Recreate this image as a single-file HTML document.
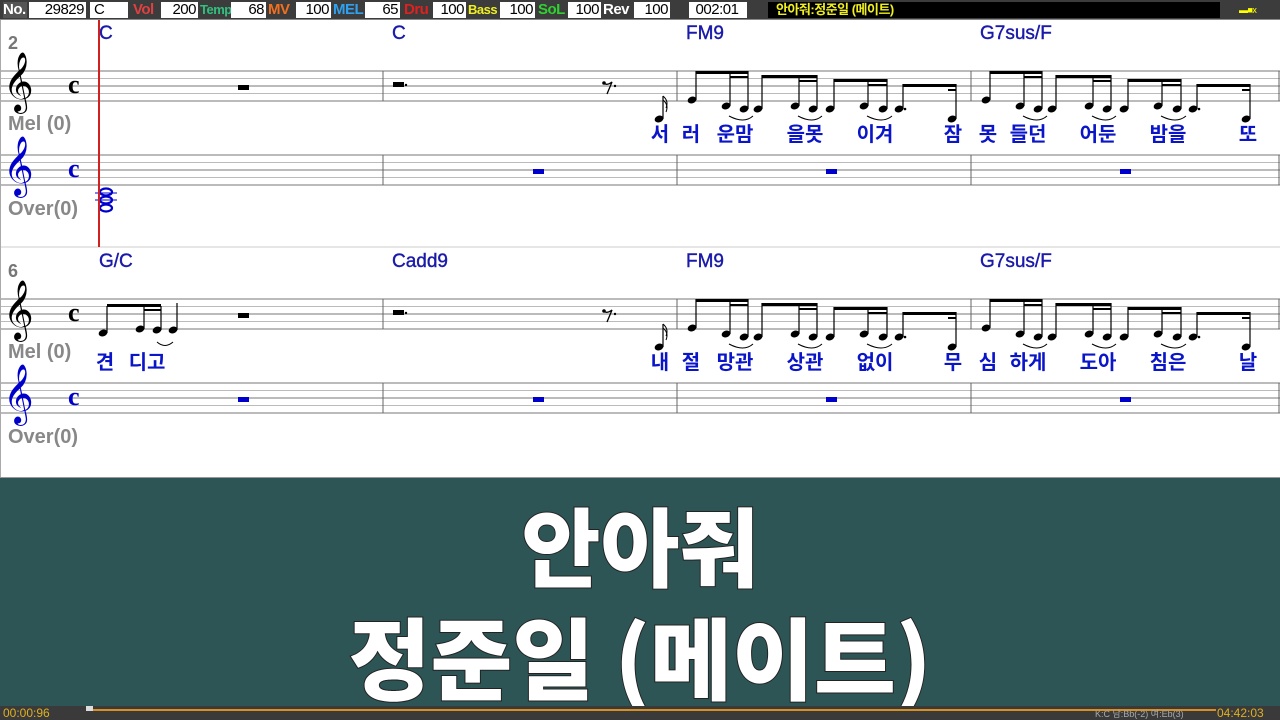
<!DOCTYPE html>
<html><head><meta charset="utf-8">
<style>
*{margin:0;padding:0;box-sizing:border-box}
body{width:1280px;height:720px;overflow:hidden;background:#fff;font-family:"Liberation Sans","Noto Sans CJK KR",sans-serif;position:relative}
#top{position:absolute;left:0;top:0;width:1280px;height:20px;background:#3c3c3c;border-bottom:1px solid #888;z-index:2}
.c{position:absolute;top:2px;height:16px;font-size:15px;line-height:16px;font-family:"Liberation Sans",sans-serif;letter-spacing:-0.5px}
.w{background:#fff;color:#000;text-align:right;padding-right:2px}
.l{font-weight:bold}
#band{position:absolute;left:0;top:477px;width:1280px;height:229px;background:#2d5555;border-top:1px solid #999}
.big{position:absolute;left:0;width:1280px;text-align:center;color:#fff;font-family:"Noto Sans CJK KR",sans-serif;font-weight:900;-webkit-text-stroke:2px #222;paint-order:stroke fill;line-height:1}
#bot{position:absolute;left:0;top:706px;width:1280px;height:14px;background:#3a3a3a}
</style></head><body>
<svg id="s" width="1280" height="477" style="position:absolute;left:0;top:0" viewBox="0 0 1280 477"></svg>
<div id="top">
<div class="c l" style="left:3px;color:#fff;background:#555;width:24px">No.</div>
<div class="c w" style="left:29px;width:57px">29829</div>
<div class="c w" style="left:90px;width:38px;text-align:left;padding-left:4px">C</div>
<div class="c l" style="left:133px;color:#e04040">Vol</div>
<div class="c w" style="left:161px;width:37px">200</div>
<div class="c l" style="left:200px;color:#30c080;font-size:13px">Temp</div>
<div class="c w" style="left:231px;width:35px">68</div>
<div class="c l" style="left:268px;color:#f07020">MV</div>
<div class="c w" style="left:296px;width:35px">100</div>
<div class="c l" style="left:333px;color:#30a0f0">MEL</div>
<div class="c w" style="left:365px;width:35px">65</div>
<div class="c l" style="left:404px;color:#e02020">Dru</div>
<div class="c w" style="left:433px;width:33px">100</div>
<div class="c l" style="left:468px;color:#f0f020;font-size:13px">Bass</div>
<div class="c w" style="left:500px;width:35px">100</div>
<div class="c l" style="left:538px;color:#30d030">SoL</div>
<div class="c w" style="left:568px;width:33px">100</div>
<div class="c l" style="left:603px;color:#fff">Rev</div>
<div class="c w" style="left:634px;width:36px">100</div>
<div class="c w" style="left:689px;width:58px;text-align:center">002:01</div>
<div class="c" style="left:768px;width:452px;background:#000;color:#f0f020;font-weight:bold;font-family:'Liberation Sans','Noto Sans CJK KR',sans-serif;font-size:13px;padding-left:8px">안아줘:정준일 (메이트)</div>
<div class="c" style="left:1239px;width:36px;color:#ff0;font-size:9px">▬■x</div>
</div>
<div id="band">
<div class="big" style="top:22px;font-size:86px">안아줘</div>
<div class="big" style="top:132px;font-size:89px">정준일 (메이트)</div>
</div>
<div id="bot">
<div style="position:absolute;left:88px;top:3px;width:1128px;height:2px;background:#d89020"></div>
<div style="position:absolute;left:86px;top:0;width:7px;height:5px;background:#ddd"></div>
<div style="position:absolute;left:3px;top:0;font-size:12px;color:#e0b020;line-height:14px">00:00:96</div>
<div style="position:absolute;left:1095px;top:2px;font-size:9px;color:#aaa;line-height:12px">K:C 남:Bb(-2) 여:Eb(3)</div>
<div style="position:absolute;left:1217px;top:0;font-size:12px;color:#e0b020;line-height:14px">04:42:03</div>
</div>
<script>
const s=document.getElementById('s');let h='';
const bars=[0,383,677,971,1279];
function staff(y){for(let i=0;i<5;i++){h+=`<line x1="0" x2="1280" y1="${y+i*7.5}" y2="${y+i*7.5}" stroke="${i%2?'#bbb':'#777'}" stroke-width="1"/>`;}
 for(const b of bars.slice(1))h+=`<line x1="${b}" x2="${b}" y1="${y}" y2="${y+30}" stroke="#666"/>`;}
function rest(x,y,c){h+=`<rect x="${x}" y="${y}" width="11" height="5" fill="${c}"/>`}
function note(x,y,sy){h+=`<ellipse cx="${x}" cy="${y}" rx="4.5" ry="3.3" transform="rotate(-20 ${x} ${y})" fill="#000"/><line x1="${x+4}" x2="${x+4}" y1="${y}" y2="${sy}" stroke="#000" stroke-width="1.2"/>`}
function measure(o,base){
 const g=[[[15,100],[49,106],[67,109]],[[81,109],[118,106],[136,109]],[[153,109],[187,106],[206,109]],[[222,109],[275,119]]];
 const tops=[71,75,79,84];
 g.forEach((gr,i)=>{const t=tops[i]+base;gr.forEach(n=>note(o+n[0],n[1]+base,t));
  const x1=o+gr[0][0]+4,x2=o+gr[gr.length-1][0]+4;
  h+=`<rect x="${x1}" y="${t}" width="${x2-x1}" height="3" fill="#000"/>`;
  const x3=o+gr[gr.length-2][0]+4; h+=`<rect x="${i==3?x2-8:x3}" y="${t+5}" width="${i==3?8:x2-x3}" height="2" fill="#000"/>`;
  if(i<3)h+=`<path d="M${o+gr[1][0]+3} ${base+116} q${(gr[2][0]-gr[1][0])/2+6} 8 ${gr[2][0]-gr[1][0]+6} 0" stroke="#000" fill="none"/>`;
 });
 h+=`<circle cx="${o+228}" cy="${109+base}" r="1.3"/>`;
}
function system(b,c1,c2,c3,c4,num,lyr){
 h+=`<text x="8" y="${49+b}" font-size="18" font-weight="bold" fill="#777">${num}</text>`;
 staff(71+b);staff(155+b);
 h+=`<text x="3" y="${99+b}" font-size="52" fill="#000" font-family="DejaVu Serif">𝄞</text>`;
 h+=`<text x="3" y="${183+b}" font-size="52" fill="#00c" font-family="DejaVu Serif">𝄞</text>`;
 h+=`<text x="68" y="${93+b}" font-size="26" font-weight="bold" font-family="Liberation Serif">c</text>`;
 h+=`<text x="68" y="${177+b}" font-size="26" font-weight="bold" fill="#00c" font-family="Liberation Serif">c</text>`;
 h+=`<text x="8" y="${130+b}" font-size="20" font-weight="bold" fill="#888">Mel (0)</text>`;
 h+=`<text x="8" y="${215+b}" font-size="20" font-weight="bold" fill="#888">Over(0)</text>`;
 [[c1,99],[c2,392],[c3,686],[c4,980]].forEach(a=>h+=`<text x="${a[1]}" y="${39+b}" font-size="19" fill="#1a1aaa" stroke="#1a1aaa" stroke-width="0.4">${a[0]}</text>`);
 rest(238,85+b,'#000');rest(393,82+b,'#000');
 h+=`<circle cx="406" cy="${85+b}" r="1.2"/>`;
 h+=`<path d="M603 ${83+b} q4 3 9 -1 l-5 12" stroke="#000" stroke-width="1.3" fill="none"/><circle cx="604" cy="${83+b}" r="1.8"/><circle cx="615" cy="${86+b}" r="1.2"/>`;
 note(659,119+b,96+b);h+=`<path d="M663 ${96+b} q6 5 3 12" stroke="#000" fill="none"/><path d="M663 ${100+b} q6 5 3 12" stroke="#000" fill="none"/>`;
 measure(677,b);measure(971,b);
 [533,826,1120].forEach(x=>rest(x,169+b,'#00c'));
 lyr.forEach(l=>h+=`<text x="${l[1]}" y="${141+b}" font-size="20" font-weight="bold" fill="#0a14c8" text-anchor="middle" font-family="Noto Sans CJK KR,sans-serif">${l[0]}</text>`);
}
const L=(a)=>a.map((t,i)=>[t,[660,691,735,805,875,953,988,1028,1098,1168,1248][i]]);
system(0,'C','C','FM9','G7sus/F','2',L(['서','러','운맘','을못','이겨','잠','못','들던','어둔','밤을','또']));
system(228,'G/C','Cadd9','FM9','G7sus/F','6',L(['내','절','망관','상관','없이','무','심','하게','도아','침은','날']).concat([['견',105],['디고',147]]));
rest(238,169+228,'#00c');
note(103,333,306);note(140,329,306);note(157,330,306);note(173,330,303);
h+=`<rect x="107" y="304" width="54" height="3"/><rect x="144" y="309" width="17" height="2"/>`;
h+=`<path d="M157 342 q8 7 16 0" stroke="#000" fill="none"/>`;
h+=`<ellipse cx="106" cy="192" rx="6" ry="3.5" fill="none" stroke="#00c" stroke-width="2.2"/><ellipse cx="106" cy="200" rx="6" ry="3.5" fill="none" stroke="#00c" stroke-width="2.2"/><ellipse cx="106" cy="208" rx="6" ry="3.5" fill="none" stroke="#00c" stroke-width="2.2"/>`;
h+=`<line x1="95" x2="117" y1="193" y2="193" stroke="#00c"/><line x1="95" x2="117" y1="200" y2="200" stroke="#00c"/>`;
h+=`<line x1="0" x2="1280" y1="247" y2="247" stroke="#ccc"/><line x1="0.5" x2="0.5" y1="20" y2="477" stroke="#aaa"/>`;
h+=`<line x1="99" x2="99" y1="20" y2="247" stroke="#d02020" stroke-width="2"/>`;
s.innerHTML=h;
</script>
</body></html>
